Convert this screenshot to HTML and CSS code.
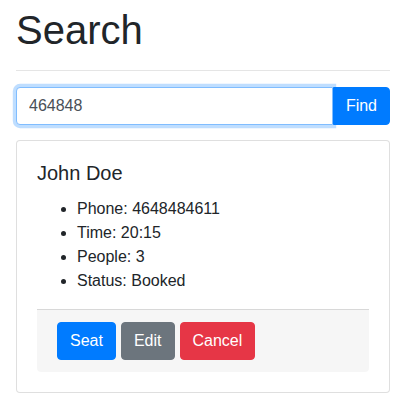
FILE: index.html
```html
<!DOCTYPE html>
<html lang="en">
<head>
<meta charset="utf-8">
<title>Search</title>
<link rel="stylesheet" href="styles.css">
</head>
<body>
<div class="page">
  <h1 class="title">Search</h1>
  <hr class="divider">
  <form class="input-group">
    <input class="search-input" type="text" value="464848">
    <button class="btn btn-primary btn-append" type="button">Find</button>
  </form>
  <div class="card">
    <div class="card-body">
      <h5 class="card-title">John Doe</h5>
      <ul class="details">
        <li>Phone: 4648484611</li>
        <li>Time: 20:15</li>
        <li>People: 3</li>
        <li>Status: Booked</li>
      </ul>
      <div class="card-footer">
        <button class="btn btn-primary" type="button">Seat</button>
        <button class="btn btn-secondary" type="button">Edit</button>
        <button class="btn btn-danger" type="button">Cancel</button>
      </div>
    </div>
  </div>
</div>
</body>
</html>
```

FILE: styles.css
```css
* { box-sizing: border-box; }
html, body { margin: 0; }
body {
  font-family: "Liberation Sans", Arial, sans-serif;
  font-size: 16px;
  line-height: 1.5;
  color: #212529;
  background: #fff;
}
.page {
  padding: 6px 20px 0 16px;
}
.title {
  margin: 0 0 8px;
  font-size: 40px;
  font-weight: 400;
  line-height: 1.2;
}
.divider {
  margin: 16px 0;
  border: 0;
  border-top: 1px solid rgba(0,0,0,.1);
  height: 0;
}
.input-group {
  display: flex;
  margin: 0;
}
.search-input {
  position: relative;
  z-index: 2;
  flex: 1 1 auto;
  min-width: 0;
  height: 38px;
  padding: 6px 12px;
  font: inherit;
  font-size: 16px;
  line-height: 1.5;
  color: #495057;
  background: #fff;
  border: 1px solid #80bdff;
  border-radius: 4px 0 0 4px;
  box-shadow: 0 0 0 3.2px rgba(0,123,255,.25);
  outline: 0;
}
.btn {
  display: inline-block;
  font: inherit;
  font-size: 16px;
  line-height: 1.5;
  padding: 6px 12px;
  border: 1px solid transparent;
  border-radius: 4px;
  color: #fff;
  cursor: pointer;
}
.btn-append {
  border-radius: 0 4px 4px 0;
  height: 38px;
}
.btn-primary { background: #007bff; border-color: #007bff; }
.btn-secondary { background: #6c757d; border-color: #6c757d; }
.btn-danger { background: #e63646; border-color: #e63646; }
.card {
  margin-top: 15px;
  border: 1px solid rgba(0,0,0,.125);
  border-radius: 4px;
  background: #fff;
}
.card-body {
  padding: 20px;
}
.card-title {
  margin: 0 0 12px;
  font-size: 20px;
  font-weight: 400;
  line-height: 1.2;
}
.details {
  margin: 0 0 16px;
  padding-left: 40px;
}
.card-footer {
  display: flex;
  gap: 5px;
  padding: 12px 20px;
  background: rgba(0,0,0,.035);
  border-top: 1px solid rgba(0,0,0,.125);
  border-radius: 0 0 4px 4px;
}
```
